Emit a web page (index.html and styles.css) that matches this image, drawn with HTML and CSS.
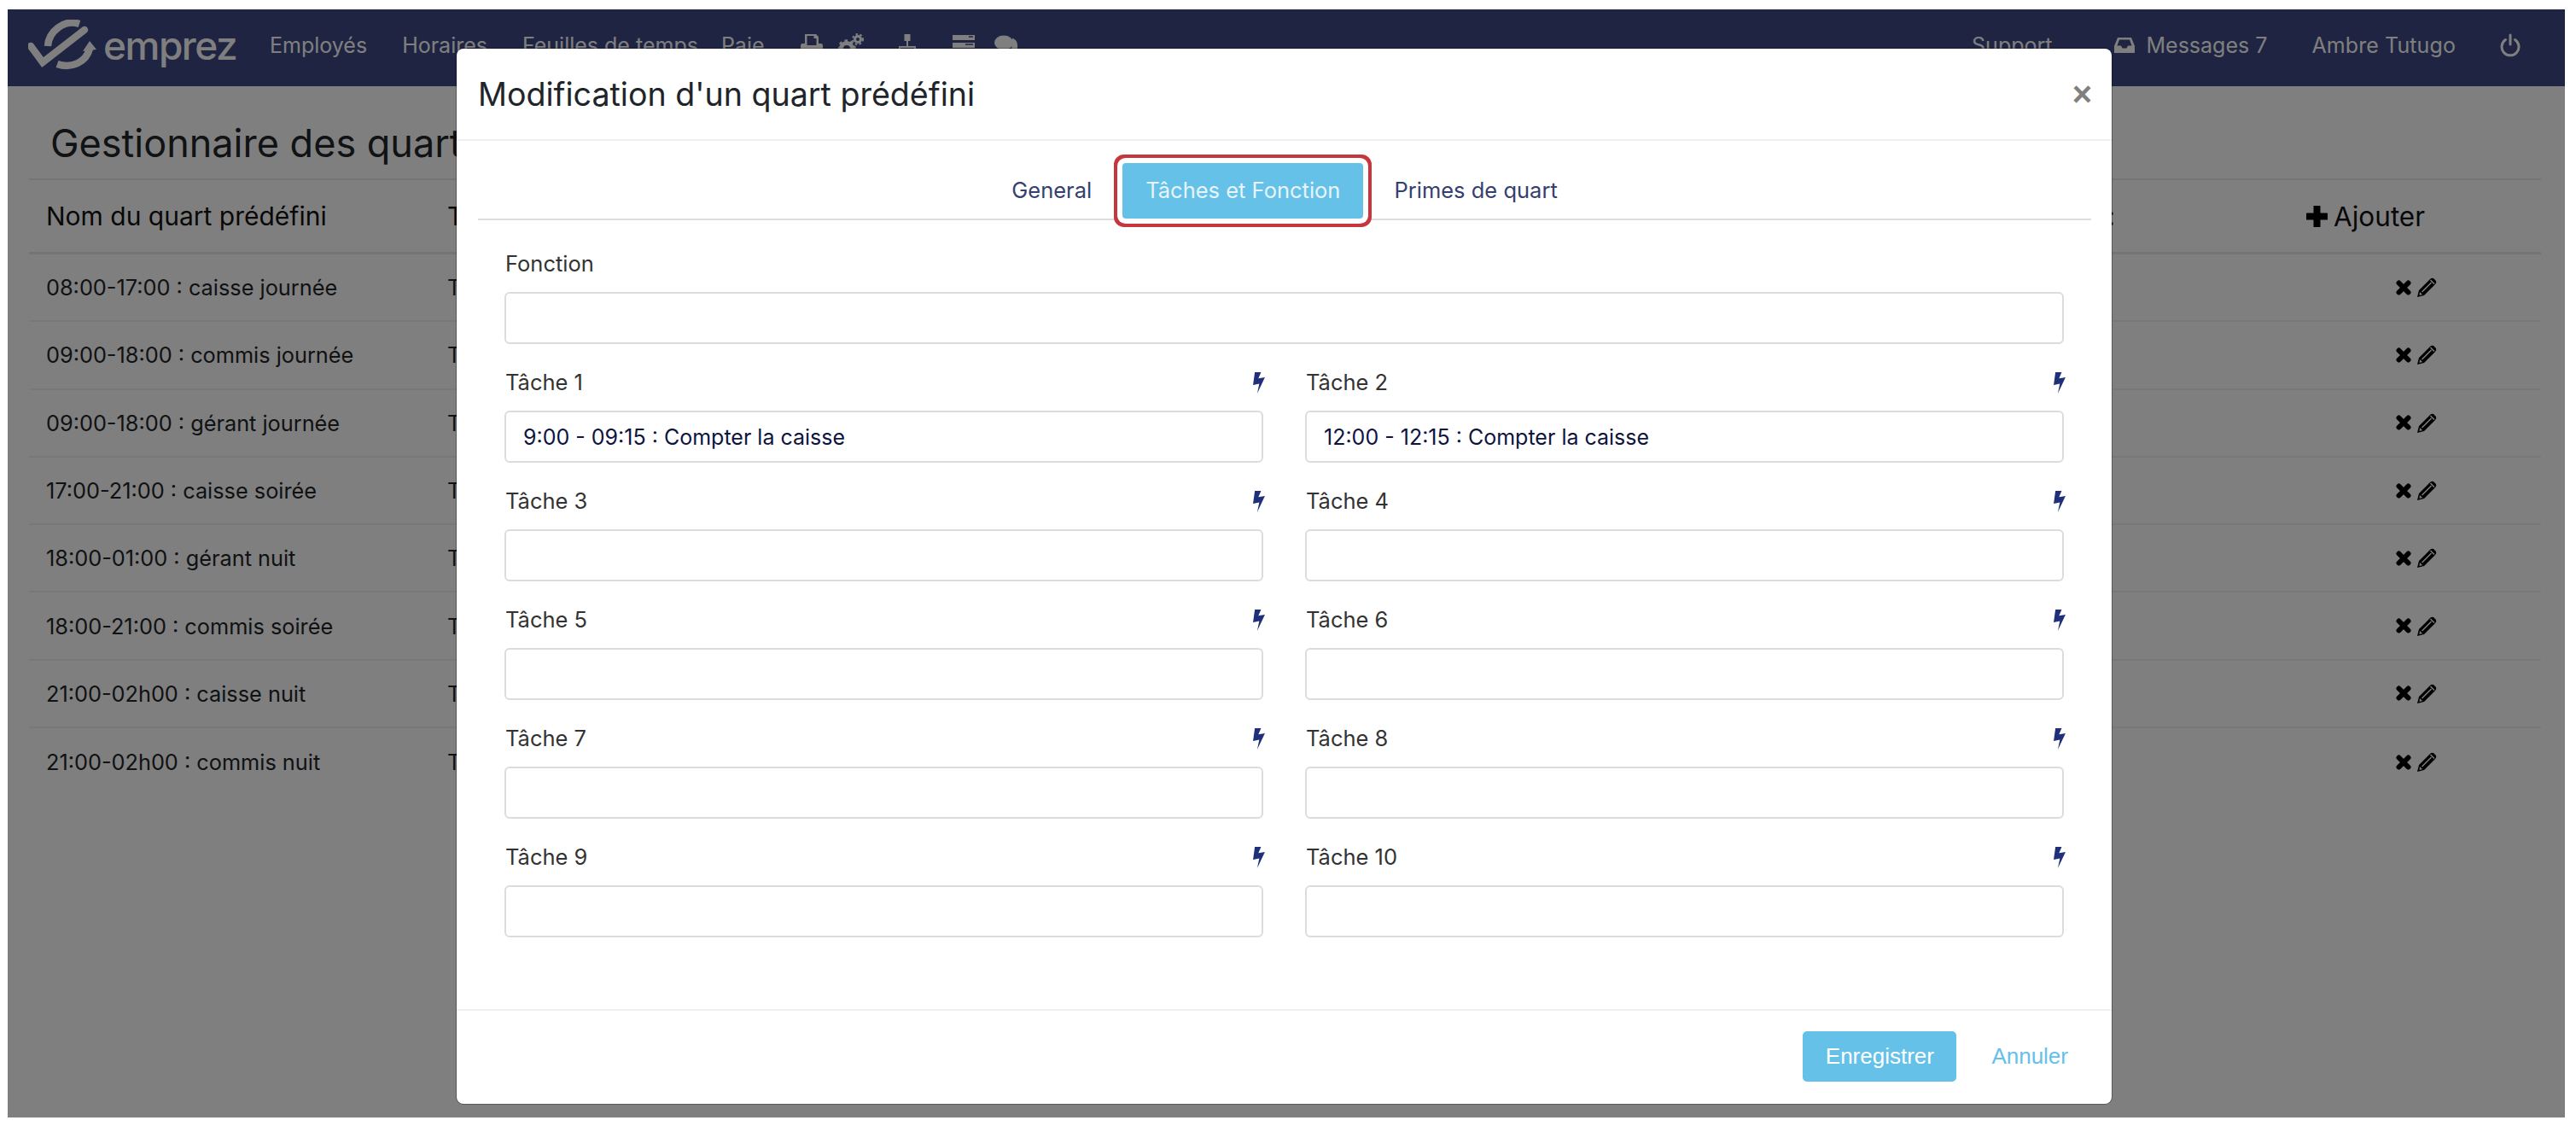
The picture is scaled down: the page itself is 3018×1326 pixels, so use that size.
FILE: index.html
```html
<!DOCTYPE html>
<html lang="fr">
<head>
<meta charset="utf-8">
<title>Gestionnaire des quarts</title>
<link rel="stylesheet" href="styles.css">
</head>
<body>
<svg class="sprite" aria-hidden="true">
  <symbol id="i-x" viewBox="0 0 18 18"><path d="M3.500 3.500L14.500 14.500M14.500 3.500L3.500 14.500" stroke="#000" stroke-width="6" stroke-linecap="round"/></symbol>
  <symbol id="i-pen" viewBox="0 0 23 23"><path d="M0 23L2 15L15 2Q17 0 19 1L22 4Q23 6 21 8L8 21ZM5 16.500L16 5.500L17 6.500L6 17.500ZM15 3.500L16 2.500L20.500 7L19.500 8ZM3 17L6 20L2.500 21Z" fill="#000" fill-rule="evenodd"/></symbol>
  <symbol id="i-bolt" viewBox="0 0 40 72"><path d="M6 0H27L18 21L40 17L14 72L21 39L0 43Z"/></symbol>
</svg>
<div class="page">
  <nav class="navbar">
    <div class="brand">
      <svg class="logo" viewBox="0 0 82 60" width="82" height="60">
        <g fill="none" stroke="#fff" stroke-linecap="round">
          <path d="M3 31 L17 50 L66 12" stroke-width="8.5"/>
          <path d="M23 31 C24 14 42 -1 60 5" stroke-width="8.5" stroke-linecap="butt"/>
          <path d="M34 52 C50 58 68 50 72 34" stroke-width="8.5" stroke-linecap="butt"/>
        </g>
        <path d="M64 37 L72 25 L80 35 Z" fill="#fff"/>
      </svg>
      <span class="wordmark">emprez</span>
    </div>
    <ul class="nav-main">
      <li class="nav-emp">Employés</li>
      <li class="nav-hor">Horaires</li>
      <li class="nav-feu">Feuilles de temps</li>
      <li class="nav-paie">Paie</li>
    </ul>
    <ul class="nav-icons">
      <li><svg viewBox="0 0 26 28" width="26" height="28"><path d="M5 1H18L21 4V12H24Q26 12 26 15V22H0V15Q0 12 2 12H5ZM7.500 3V14H18.500V6H15.500V3Z" fill="#fff" fill-rule="evenodd"/></svg></li>
      <li><svg viewBox="0 0 30 28" width="30" height="28"><circle cx="10" cy="18" r="6.500" fill="none" stroke="#fff" stroke-width="5"/><circle cx="10" cy="18" r="9.500" fill="none" stroke="#fff" stroke-width="2.500" stroke-dasharray="3.500 3.500"/><circle cx="23" cy="7" r="3.500" fill="none" stroke="#fff" stroke-width="3"/><circle cx="23" cy="7" r="6" fill="none" stroke="#fff" stroke-width="2" stroke-dasharray="2.500 2.500"/></svg></li>
      <li><svg viewBox="0 0 22 28" width="22" height="28"><path d="M7.500 1H14.500V9H7.500Z" fill="#fff"/><path d="M11 9V16M2 24V16H20V24" fill="none" stroke="#fff" stroke-width="2"/></svg></li>
      <li><svg viewBox="0 0 26 28" width="26" height="28"><path d="M0 2H26V8H0ZM0 11H26V17H0Z" fill="#fff"/><path d="M19 4H24M15 13H24" stroke="#3c4884" stroke-width="1.500"/></svg></li>
      <li><svg viewBox="0 0 27 28" width="27" height="28"><ellipse cx="11" cy="11" rx="11" ry="8.500" fill="#fff"/><path d="M21 5.500C25 7 27 10 27 14V20H20Z" fill="#fff"/></svg></li>
    </ul>
    <ul class="nav-right">
      <li class="nav-support">Support</li>
      <li class="nav-msg">
        <svg viewBox="0 0 24 20" width="24" height="20"><path d="M4 1H20L24 11V19H0V11Z" fill="#fff"/><path d="M6 3.500H18L20.500 10.500H16L14.500 13.500H9.500L8 10.500H3.500Z" fill="#3c4884"/></svg>
        <span>Messages 7</span>
      </li>
      <li class="nav-user">Ambre Tutugo</li>
      <li class="nav-power">
        <svg viewBox="0 0 24 28" width="24" height="28"><path d="M6.500 7.500A10 10 0 1 0 17.500 7.500" fill="none" stroke="#fff" stroke-width="3" stroke-linecap="round"/><path d="M12 2V13" stroke="#fff" stroke-width="3" stroke-linecap="round"/></svg>
      </li>
    </ul>
  </nav>

  <main class="content">
    <h1 class="page-title">Gestionnaire des quarts prédéfinis</h1>
    <div class="table">
      <div class="row head">
        <div class="cell-name">Nom du quart prédéfini</div>
        <div class="cell-task"><span>Tâches</span><span>Primes :</span></div>
        <div class="cell-actions add">
          <svg class="plus" viewBox="0 0 25 25" width="25" height="25"><path d="M12.500 1.500V23.500M1.500 12.500H23.500" stroke="#000" stroke-width="8" stroke-linecap="round"/></svg>
          <span>Ajouter</span>
        </div>
      </div>
      <div class="row"><div class="cell-name">08:00-17:00 : caisse journée</div><div class="cell-task"><span>Tâches</span></div><div class="cell-actions"><svg class="ico-x"><use href="#i-x"/></svg><svg class="ico-pen"><use href="#i-pen"/></svg></div></div>
      <div class="row"><div class="cell-name">09:00-18:00 : commis journée</div><div class="cell-task"><span>Tâches</span></div><div class="cell-actions"><svg class="ico-x"><use href="#i-x"/></svg><svg class="ico-pen"><use href="#i-pen"/></svg></div></div>
      <div class="row"><div class="cell-name">09:00-18:00 : gérant journée</div><div class="cell-task"><span>Tâches</span></div><div class="cell-actions"><svg class="ico-x"><use href="#i-x"/></svg><svg class="ico-pen"><use href="#i-pen"/></svg></div></div>
      <div class="row"><div class="cell-name">17:00-21:00 : caisse soirée</div><div class="cell-task"><span>Tâches</span></div><div class="cell-actions"><svg class="ico-x"><use href="#i-x"/></svg><svg class="ico-pen"><use href="#i-pen"/></svg></div></div>
      <div class="row"><div class="cell-name">18:00-01:00 : gérant nuit</div><div class="cell-task"><span>Tâches</span></div><div class="cell-actions"><svg class="ico-x"><use href="#i-x"/></svg><svg class="ico-pen"><use href="#i-pen"/></svg></div></div>
      <div class="row"><div class="cell-name">18:00-21:00 : commis soirée</div><div class="cell-task"><span>Tâches</span></div><div class="cell-actions"><svg class="ico-x"><use href="#i-x"/></svg><svg class="ico-pen"><use href="#i-pen"/></svg></div></div>
      <div class="row"><div class="cell-name">21:00-02h00 : caisse nuit</div><div class="cell-task"><span>Tâches</span></div><div class="cell-actions"><svg class="ico-x"><use href="#i-x"/></svg><svg class="ico-pen"><use href="#i-pen"/></svg></div></div>
      <div class="row last"><div class="cell-name">21:00-02h00 : commis nuit</div><div class="cell-task"><span>Tâches</span></div><div class="cell-actions"><svg class="ico-x"><use href="#i-x"/></svg><svg class="ico-pen"><use href="#i-pen"/></svg></div></div>
    </div>
  </main>

  <div class="backdrop"></div>

  <section class="modal">
    <header class="modal-header">
      <h2 class="modal-title">Modification d'un quart prédéfini</h2>
      <span class="close">×</span>
    </header>
    <div class="tabs">
      <span class="tab">General</span>
      <span class="tab active">Tâches et Fonction</span>
      <span class="tab">Primes de quart</span>
    </div>
    <div class="modal-body">
      <div class="field full">
        <div class="label-row"><span>Fonction</span></div>
        <div class="input"></div>
      </div>
      <div class="field">
        <div class="label-row"><span>Tâche 1</span><svg class="bolt"><use href="#i-bolt"/></svg></div>
        <div class="input">9:00 - 09:15 : Compter la caisse</div>
      </div>
      <div class="field">
        <div class="label-row"><span>Tâche 2</span><svg class="bolt"><use href="#i-bolt"/></svg></div>
        <div class="input">12:00 - 12:15 : Compter la caisse</div>
      </div>
      <div class="field">
        <div class="label-row"><span>Tâche 3</span><svg class="bolt"><use href="#i-bolt"/></svg></div>
        <div class="input"></div>
      </div>
      <div class="field">
        <div class="label-row"><span>Tâche 4</span><svg class="bolt"><use href="#i-bolt"/></svg></div>
        <div class="input"></div>
      </div>
      <div class="field">
        <div class="label-row"><span>Tâche 5</span><svg class="bolt"><use href="#i-bolt"/></svg></div>
        <div class="input"></div>
      </div>
      <div class="field">
        <div class="label-row"><span>Tâche 6</span><svg class="bolt"><use href="#i-bolt"/></svg></div>
        <div class="input"></div>
      </div>
      <div class="field">
        <div class="label-row"><span>Tâche 7</span><svg class="bolt"><use href="#i-bolt"/></svg></div>
        <div class="input"></div>
      </div>
      <div class="field">
        <div class="label-row"><span>Tâche 8</span><svg class="bolt"><use href="#i-bolt"/></svg></div>
        <div class="input"></div>
      </div>
      <div class="field">
        <div class="label-row"><span>Tâche 9</span><svg class="bolt"><use href="#i-bolt"/></svg></div>
        <div class="input"></div>
      </div>
      <div class="field">
        <div class="label-row"><span>Tâche 10</span><svg class="bolt"><use href="#i-bolt"/></svg></div>
        <div class="input"></div>
      </div>
    </div>
    <footer class="modal-footer">
      <span class="btn-save">Enregistrer</span>
      <span class="btn-cancel">Annuler</span>
    </footer>
  </section>
</div>
</body>
</html>
```
FILE: styles.css
```css
* { box-sizing: border-box; }
html, body { margin: 0; height: 100%; background: #fff; }
body {
  padding: 11px 13px 17px 9px;
  font-family: Inter, "Noto Sans", sans-serif;
  color: #212529;
  overflow: hidden;
}
ul { list-style: none; margin: 0; padding: 0; display: flex; align-items: center; }
h1, h2 { margin: 0; font-weight: 400; }
.sprite { display: none; }

.page {
  position: relative;
  height: 1298px;
  background: #fff;
  overflow: hidden;
}

/* Navbar */
.navbar {
  height: 90px;
  padding-bottom: 7px;
  background: #3c4884;
  color: #fff;
  display: flex;
  align-items: center;
  font-size: 25px;
}
.brand { display: flex; align-items: center; margin-left: 24px; width: 283px; }
.logo { flex: none; }
.wordmark { margin-left: 6px; font-size: 46px; letter-spacing: -1.5px; line-height: 1; font-weight: 500; }
.nav-main { gap: 41px; }
.nav-paie { margin-left: -14px; }
.nav-icons { margin-left: 42px; gap: 23px; }
.nav-icons li { display: flex; }
.nav-icons li:nth-child(1) { margin-right: -5px; }
.nav-icons li:nth-child(2) { margin-right: 17px; }
.nav-icons li:nth-child(3) { margin-right: 19px; }
.nav-right { margin-left: auto; margin-right: 52px; }
.nav-msg { display: flex; align-items: center; gap: 14px; margin-left: 72px; }
.nav-user { margin-left: 52px; letter-spacing: .1px; }
.nav-power { display: flex; margin-left: 52px; }

/* Background table */
.content { padding: 0 28px 0 25px; }
.page-title { font-size: 45px; line-height: 54px; padding: 40px 0 14px 25px; color: #212529; }
.table { border-top: 2px solid #e8e8e8; }
.row {
  display: flex;
  align-items: center;
  height: 79.300px;
  border-bottom: 2px solid #f0f0f0;
  font-size: 25.300px;
  color: #212529;
}
.row.last { border-bottom: 0; }
.row.head { height: 87px; font-size: 30px; color: #111; border-bottom: 3px solid #e8e8e8; }
.cell-name { width: 490px; padding-left: 20px; flex: none; }
.cell-task { flex: 1; display: flex; justify-content: space-between; margin-right: 224px; }
.cell-actions { width: 275px; flex: none; display: flex; align-items: center; padding-left: 105px; }
.cell-actions.add { padding-left: 0; gap: 7px; font-size: 31.500px; }
.ico-x { width: 18px; height: 18px; flex: none; }
.ico-pen { width: 23px; height: 23px; flex: none; margin-left: 7px; }

/* Modal */
.backdrop { position: absolute; inset: 0; background: rgba(0, 0, 0, .5); }
.modal {
  position: absolute;
  left: 526px;
  top: 46px;
  width: 1939px;
  background: #fff;
  border-radius: 8px;
  box-shadow: 0 0 0 1px rgba(0, 0, 0, .3);
}
.modal-header {
  height: 108px;
  display: flex;
  align-items: center;
  justify-content: space-between;
  padding: 0 23px 0 25px;
  border-bottom: 2px solid #f0f0f0;
}
.modal-title { font-size: 37.600px; color: #212529; }
.close {
  font-family: "Liberation Sans", sans-serif;
  font-size: 40px;
  font-weight: 700;
  line-height: 1;
  color: #808080;
}
.tabs {
  height: 93px;
  margin: 0 24px 0 25px;
  display: flex;
  justify-content: center;
  align-items: flex-end;
  gap: 36px;
  border-bottom: 2px solid #ddd;
}
.tab {
  height: 65px;
  padding-bottom: 2px;
  display: flex;
  align-items: center;
  font-size: 25.500px;
  color: #343f6e;
}
.tab.active {
  padding: 0 27px 2px;
  background: #65c1e8;
  color: #e6f5fb;
  border-radius: 4px;
  box-shadow: 0 0 0 6px #fff, 0 0 0 10px #c5373d;
}
.modal-body {
  display: grid;
  grid-template-columns: 1fr 1fr;
  column-gap: 49px;
  row-gap: 25px;
  padding: 31px 56px 84px 56px;
  border-bottom: 2px solid #f0f0f0;
}
.field.full { grid-column: 1 / -1; }
.label-row {
  height: 40px;
  margin-bottom: 13px;
  padding-left: 1px;
  display: flex;
  align-items: center;
  justify-content: space-between;
  font-size: 25.500px;
  line-height: 38px;
  color: #333;
}
.bolt { width: 14px; height: 25px; fill: #1f2f7a; flex: none; margin: 1px -2px 0 0; }
.input {
  height: 61px;
  border: 2px solid #dcdcdc;
  border-radius: 6px;
  display: flex;
  align-items: center;
  padding: 0 20px;
  font-size: 25px;
  color: #0e1440;
}
.modal-footer {
  height: 109px;
  display: flex;
  align-items: center;
  justify-content: flex-end;
  padding-right: 51px;
  font-family: "Liberation Sans", sans-serif;
  font-size: 26px;
}
.btn-save {
  width: 180px;
  height: 59px;
  margin-bottom: 2px;
  display: flex;
  align-items: center;
  justify-content: center;
  background: #65c1e8;
  color: #fff;
  border-radius: 5px;
}
.btn-cancel { margin-left: 41px; color: #65c1e8; margin-bottom: 2px; }
```
